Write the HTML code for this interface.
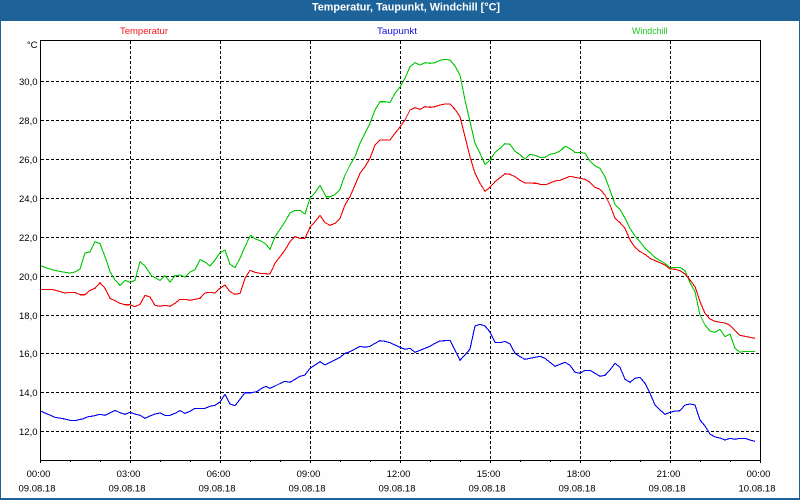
<!DOCTYPE html>
<html><head><meta charset="utf-8"><style>
html,body{margin:0;padding:0;background:#fff;width:800px;height:500px;overflow:hidden}
svg{display:block}
text{font-family:"Liberation Sans",sans-serif;font-size:9.5px;fill:#000}
.g{stroke:#000;stroke-width:1;stroke-dasharray:3 2;fill:none}
.l{fill:none;stroke-width:1.1;stroke-linejoin:round}
.f{stroke:#000;stroke-width:1;fill:none}
</style></head><body>
<svg width="800" height="500" viewBox="0 0 800 500" xmlns="http://www.w3.org/2000/svg">
<rect width="800" height="500" fill="#fefefe"/>
<rect x="0" y="0" width="800" height="21" fill="#1d6399"/>
<rect x="0" y="0" width="1" height="500" fill="#1d6399"/>
<rect x="799" y="0" width="1" height="500" fill="#1d6399"/>
<rect x="0" y="498" width="800" height="2" fill="#1d6399"/>
<text x="312" y="10.5" textLength="188" lengthAdjust="spacingAndGlyphs" style="font-weight:bold;font-size:10.8px;fill:#fff">Temperatur, Taupunkt, Windchill [°C]</text>
<text x="120" y="34" textLength="48" lengthAdjust="spacingAndGlyphs" style="fill:#f01818">Temperatur</text>
<text x="377" y="34" textLength="40" lengthAdjust="spacingAndGlyphs" style="fill:#1010e0">Taupunkt</text>
<text x="632" y="34" textLength="35.5" lengthAdjust="spacingAndGlyphs" style="fill:#20c820">Windchill</text>
<g shape-rendering="crispEdges">
<path class="g" d="M41 81.5H760M41 120.5H760M41 159.5H760M41 198.5H760M41 237.5H760M41 276.5H760M41 315.5H760M41 353.5H760M41 392.5H760M41 431.5H760"/>
<path class="g" d="M130.5 41V460M220.5 41V460M310.5 41V460M400.5 41V460M490.5 41V460M580.5 41V460M670.5 41V460"/>
<rect class="f" x="40.5" y="40.5" width="720" height="420"/>
<path class="f" d="M40.5 460V463M70.5 460V462M100.5 460V462M130.5 460V463M160.5 460V462M190.5 460V462M220.5 460V463M250.5 460V462M280.5 460V462M310.5 460V463M340.5 460V462M370.5 460V462M400.5 460V463M430.5 460V462M460.5 460V462M490.5 460V463M520.5 460V462M550.5 460V462M580.5 460V463M610.5 460V462M640.5 460V462M670.5 460V463M700.5 460V462M730.5 460V462M760.5 460V463"/>
<polyline class="l" stroke="#00c800" points="41,265.7 46.7,268 53,270 63,272 70,273 75,272 80,269 85,253 90,252 95,241.7 100,243.7 105,256.7 110,271.7 115,280 120,285.3 125,280.3 130,282.3 135,280.3 140,261.7 145,266 151.7,276 160,280.3 165,275.7 170,282 175,275.7 180,275 185,277 190,272 195,269.7 200,259.7 205,262 210,266 215,260 220,252.7 225,250 230,264.3 235,267.7 240,258.3 245,246.7 250.5,235.3 255,238.7 260,240.7 265,243.3 270,249.3 275,236.7 280,229.3 285,221.7 290,213 295,210.3 300,210.3 305,214 310,198.3 315,192.7 320,185.3 326,196.7 330,196.7 335,194.7 340,189.3 345,175 350,165 355,156.7 360,143.3 365,133.3 370,123.3 375,110 380,101.7 385,101.7 390,102.5 395,93.3 400,87 405,78.3 410,66.7 415,62.7 420,65 425,62.7 430,63.3 435,62.7 440,60.3 445,59.3 450,60 455,66 460,75 465,100 470,121.7 475,143.3 480,153.3 485,164.3 490,160.3 495,152.3 500,148.3 505,143.7 510,144.3 515,151.3 520,154.7 525,159 530,154.3 535,155.3 540,157.3 545,157.3 550,154.3 555,153.3 560,151.2 565,146.3 570,148.5 575,152.3 580,152.3 585,153.3 590,161 595,166 600,168.3 605,176.7 610,190 615,204.3 620,209.3 625,218.3 630,228.3 635,236 640,241.7 645,248.3 650,252.7 655,257.3 660,260.7 665,263.3 670,268 675,267.3 680,267.3 685,270.7 690,282.7 695,291.7 700,315 705,325 710,331 715,332.3 720,329.3 725,336.7 730,334 735,348.3 740,352.3 745,351.3 755,351.3"/>
<polyline class="l" stroke="#f00000" points="41,289.3 51.7,289.3 58,291 65,293 70,292.3 75,292.3 80,294.7 85,294.7 90,290.3 95,288.3 100,282.7 105,288.3 110,298.3 115,300.7 120,303.3 125,304.7 130,304.7 135,306.7 140,304.3 145,295.3 150,297 155,305.3 160,306.3 165,305.3 170,306.3 175,303.3 180,299.3 185,299.3 190,300.3 195,299.3 200,298.3 205,293 210,292.3 215,293 220,288.3 225,285 230,291.7 235,294.3 240,293.3 245,278.3 250,270.3 255,272.3 260,273.3 270,274 275,263.3 280,256.7 285,250 290,241.7 295,236.7 300,238.3 305,238.3 310,227.3 315,221.7 320,215.3 325,222.7 330,225.3 335,223.3 340,218.3 345,205 350,196.7 355,185 360,173.3 365,166.7 370,158.3 375,145 380,140 390,140 395,133.3 400,127 405,120 410,110 415,107.7 420,109.3 425,106.7 430,107.3 435,106.7 440,105 445,104 450,104 455,109.3 460,116.7 465,136.7 470,156.7 475,173.3 480,183.3 485,191.3 490,187.3 495,181.7 500,177.7 505,173.7 510,174.3 515,176.7 520,180.3 525,183 536.7,183.3 540,184.3 546.7,184.3 550,183 555,181 560,180.3 565,178.3 570,176.3 575,177.3 580,178.3 585,179.3 590,182.3 595,187.3 600,189.3 605,195 610,205 615,218.3 620,222.7 625,228.3 630,240 635,247.3 640,251.7 645,254.3 650,258.3 655,260.7 660,262.7 665,265 670,269 675,269.3 680,270.7 685,274 690,280 695,286.7 700,301.7 705,313.3 710,319 715,321.3 720,322.3 725,323 730,325.3 735,330.3 740,335.3 745,336.3 755,338.3"/>
<polyline class="l" stroke="#0000f0" points="41,411.3 46.7,413.7 55,417.3 63.3,418.7 70,420.3 76.7,420.3 83.3,418.7 88.3,416.7 93.3,416 100,414.3 105,415.3 110,413 115,410.3 120,412.7 125,414.3 130,412.3 135,414 140,415.3 145,418.3 150,416 155,414 160,413 165,415.3 170,415.3 175,413.3 180,410.7 185,413.3 190,411.3 195,408.3 205,408.3 210,406.3 215,405.3 220,402 225,394.3 230,404 235,405.7 240,399.3 245,392.7 251.7,392.7 256.7,391.7 261.7,388.3 266,386.3 270,388.3 275,386 280,383.5 285,381.3 290,382.3 295,379.3 300,376.3 305,375 310,368.3 315,365 320,361.7 325,365 330,362.3 335,360 340,357.3 345,353.3 350,351.7 355,349 360,346.3 365,347.3 370,346.3 375,343.3 380,340.7 385,341.3 390,342.7 395,345 400,347.3 405,349.3 410,348.3 415,352.3 420,350.3 425,348.3 430,346.3 435,343.3 440,341 450,340.3 455,350 460,360.3 465,355 470,349 475,326 480,324.3 485,326 490,332 495,342.3 501.7,342.3 505,341.3 510,344 515,353.3 520,356.7 525,359.3 530,358.3 535,357.3 540,356.3 545,358.3 550,362.3 555,366.3 560,364.3 565,362.3 570,365.3 575,372.3 580,373.3 585,370.3 590,370.3 595,373.3 600,376.3 605,375.3 610,370 615,363.3 620,367.3 625,379.3 630,382.3 635,378.3 640,377.3 645,383.3 650,393.3 655,405 660,410 665,414.3 670,412.3 675,411 680,410.7 685,405 690,404 695,405 700,420 705,426 710,434 715,437 720,438 725,440 730,438.3 735,439.3 740,438.3 745,438.3 750,440 755,441.3"/>
</g>
<g text-anchor="end">
<text x="37.5" y="48">°C</text>
<text x="37.5" y="85">30,0</text>
<text x="37.5" y="124">28,0</text>
<text x="37.5" y="163">26,0</text>
<text x="37.5" y="202">24,0</text>
<text x="37.5" y="241">22,0</text>
<text x="37.5" y="280">20,0</text>
<text x="37.5" y="319">18,0</text>
<text x="37.5" y="357">16,0</text>
<text x="37.5" y="396">14,0</text>
<text x="37.5" y="435">12,0</text>
</g>
<g text-anchor="middle">
<text x="38.5" y="477">00:00</text><text x="128.5" y="477">03:00</text><text x="218.5" y="477">06:00</text><text x="308.5" y="477">09:00</text><text x="398.5" y="477">12:00</text><text x="488.5" y="477">15:00</text><text x="578.5" y="477">18:00</text><text x="668.5" y="477">21:00</text><text x="758.5" y="477">00:00</text>
<text x="37" y="491.5">09.08.18</text><text x="127" y="491.5">09.08.18</text><text x="217" y="491.5">09.08.18</text><text x="307" y="491.5">09.08.18</text><text x="397" y="491.5">09.08.18</text><text x="487" y="491.5">09.08.18</text><text x="577" y="491.5">09.08.18</text><text x="667" y="491.5">09.08.18</text><text x="757" y="491.5">10.08.18</text>
</g>
</svg>
</body></html>
